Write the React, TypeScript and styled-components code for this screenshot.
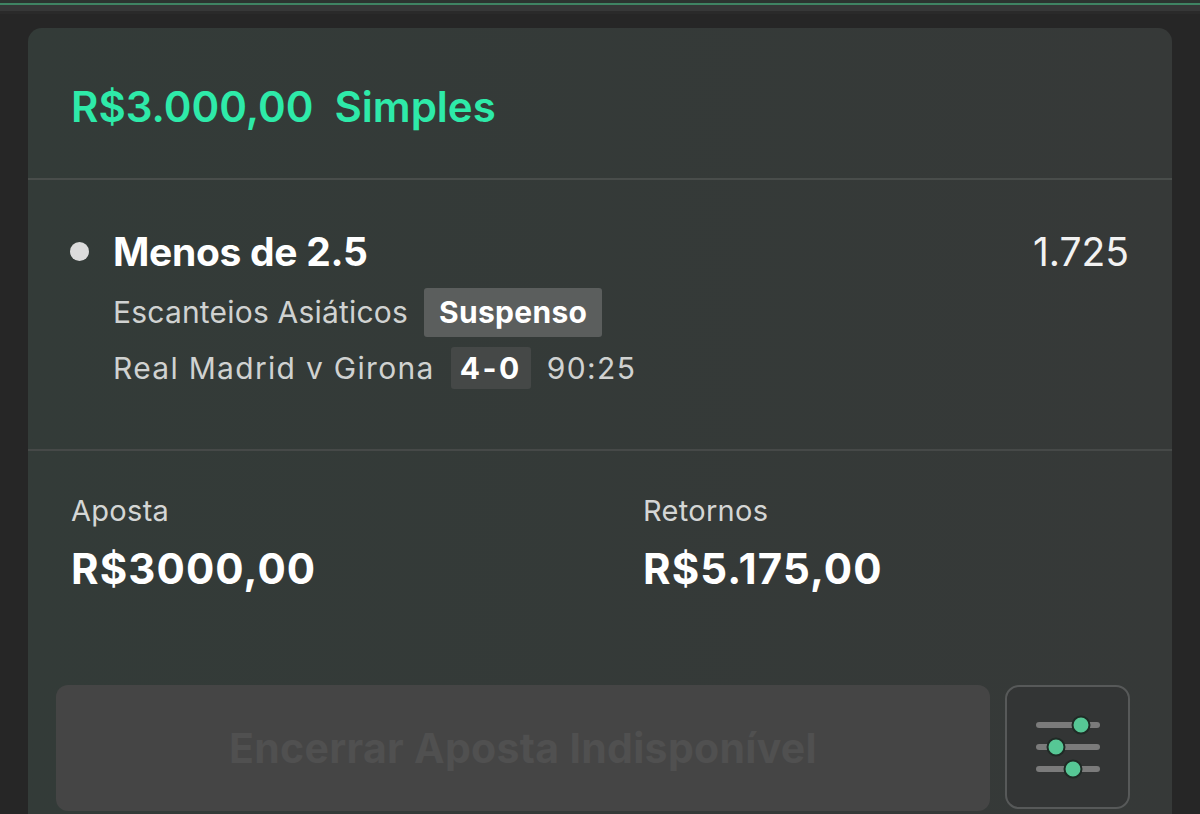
import styled, { createGlobalStyle } from "styled-components";

const GlobalStyle = createGlobalStyle`
    html, body {
        margin: 0;
        padding: 0;
        background: #262626;
        font-family: Inter, "Noto Sans", sans-serif;
        -webkit-font-smoothing: antialiased;
    }
`;

const Page = styled.div`
    width: 1200px;
    height: 814px;
    overflow: hidden;
    background: #262626;
    display: flex;
    flex-direction: column;
`;

const TopStrip = styled.div`
    height: 14px;
    background: linear-gradient(
        to bottom,
        #2c3430 0px,
        #2c3430 3px,
        #3f8463 3px,
        #3f8463 5px,
        #363737 5px,
        #363737 11px,
        #2a2a2a 11px
    );
    flex-shrink: 0;
`;

const Card = styled.div`
    margin: 14px 28px 0;
    border-radius: 14px 14px 0 0;
    background: linear-gradient(to right, #333b38, #363938);
    flex: 1;
    display: flex;
    flex-direction: column;
`;

const Header = styled.div`
    height: 152px;
    padding: 0 43px;
    display: flex;
    align-items: center;
    border-bottom: 2px solid #494d4b;
    box-sizing: border-box;
`;

const Title = styled.div`
    color: #2eeaa9;
    font-size: 42px;
    font-weight: 600;
    line-height: 50px;
    margin-top: 7px;
    white-space: pre;
`;

const Selection = styled.div`
    height: 271px;
    padding: 46px 43px 0 42px;
    border-bottom: 2px solid #464948;
    box-sizing: border-box;
    display: flex;
    flex-direction: column;
`;

const SelRow = styled.div`
    display: flex;
    align-items: center;
    height: 50px;
`;

const Bullet = styled.span`
    width: 19px;
    height: 19px;
    border-radius: 50%;
    background: #dcdcdc;
    margin: 0 24px 0 0;
    flex-shrink: 0;
`;

const SelName = styled.div`
    color: #ffffff;
    font-size: 39px;
    font-weight: 700;
    flex: 1;
    letter-spacing: -0.3px;
`;

const Odds = styled.div`
    color: #f2f2f2;
    font-size: 39px;
    font-weight: 400;
`;

const InfoRow = styled.div<{ $top: number }>`
    display: flex;
    align-items: center;
    gap: 16px;
    padding-left: 43px;
    height: 52px;
    margin-top: ${(p) => p.$top}px;
`;

const InfoText = styled.span<{ $spacing: number }>`
    color: #d0d2d1;
    font-size: 30px;
    font-weight: 400;
    letter-spacing: ${(p) => p.$spacing}px;
`;

const Tag = styled.span<{ $bg: string; $h: number; $pad: number; $spacing: number }>`
    background: ${(p) => p.$bg};
    color: #ffffff;
    font-size: 30px;
    font-weight: 700;
    height: ${(p) => p.$h}px;
    padding: 0 ${(p) => p.$pad}px;
    display: flex;
    align-items: center;
    border-radius: 3px;
    letter-spacing: ${(p) => p.$spacing}px;
`;

const Totals = styled.div`
    display: grid;
    grid-template-columns: 572px 1fr;
    padding: 42px 43px 0;
`;

const TotalBox = styled.div`
    display: flex;
    flex-direction: column;
`;

const TotalLabel = styled.span`
    color: #d4d6d5;
    font-size: 29px;
    line-height: 36px;
    font-weight: 400;
    letter-spacing: 0.3px;
`;

const TotalValue = styled.span`
    color: #ffffff;
    font-size: 42px;
    line-height: 48px;
    font-weight: 700;
    margin-top: 16px;
    letter-spacing: 1.1px;
`;

const Actions = styled.div`
    display: flex;
    gap: 15px;
    padding: 92px 42px 0 28px;
`;

const CashOutButton = styled.button`
    flex: 1;
    height: 126px;
    border: none;
    border-radius: 12px;
    background: #454545;
    color: #505050;
    font-family: Inter, "Noto Sans", sans-serif;
    font-size: 41px;
    font-weight: 700;
    letter-spacing: 0.3px;
`;

const SettingsButton = styled.button`
    width: 125px;
    height: 124px;
    border: 2px solid #575959;
    border-radius: 14px;
    background: #333535;
    display: flex;
    align-items: center;
    justify-content: center;
    padding: 0;
`;

function SlidersIcon() {
    const rows = [
        { y: 18, knob: 46 },
        { y: 40, knob: 21 },
        { y: 62, knob: 38 },
    ];
    return (
        <svg width="66" height="80" viewBox="0 0 66 80">
            {rows.map((r) => (
                <g key={r.y}>
                    <line x1="4" y1={r.y} x2="62" y2={r.y} stroke="#7b7b7b" strokeWidth="6" strokeLinecap="round" />
                    <circle cx={r.knob} cy={r.y} r="8.5" fill="#56c795" stroke="#1f2a25" strokeWidth="2" />
                </g>
            ))}
        </svg>
    );
}

export default function App() {
    return (
        <Page>
            <GlobalStyle />
            <TopStrip />
            <Card>
                <Header>
                    <Title>{"R$3.000,00  Simples"}</Title>
                </Header>
                <Selection>
                    <SelRow>
                        <Bullet />
                        <SelName>Menos de 2.5</SelName>
                        <Odds>1.725</Odds>
                    </SelRow>
                    <InfoRow $top={10}>
                        <InfoText $spacing={0.2}>Escanteios Asiáticos</InfoText>
                        <Tag $bg="#5b5e5d" $h={49} $pad={15} $spacing={0.3}>Suspenso</Tag>
                    </InfoRow>
                    <InfoRow $top={4}>
                        <InfoText $spacing={1.3}>Real Madrid v Girona</InfoText>
                        <Tag $bg="#454847" $h={42} $pad={9} $spacing={2.5}>4-0</Tag>
                        <InfoText $spacing={1.4}>90:25</InfoText>
                    </InfoRow>
                </Selection>
                <Totals>
                    <TotalBox>
                        <TotalLabel>Aposta</TotalLabel>
                        <TotalValue>R$3000,00</TotalValue>
                    </TotalBox>
                    <TotalBox>
                        <TotalLabel>Retornos</TotalLabel>
                        <TotalValue>R$5.175,00</TotalValue>
                    </TotalBox>
                </Totals>
                <Actions>
                    <CashOutButton>Encerrar Aposta Indisponível</CashOutButton>
                    <SettingsButton>
                        <SlidersIcon />
                    </SettingsButton>
                </Actions>
            </Card>
        </Page>
    );
}
